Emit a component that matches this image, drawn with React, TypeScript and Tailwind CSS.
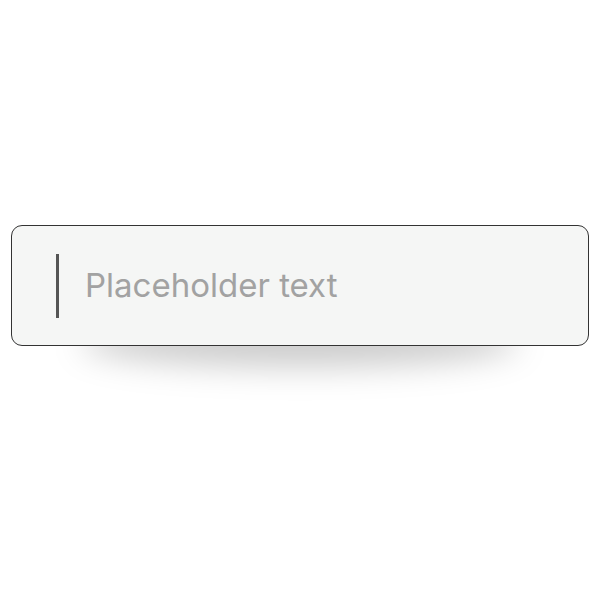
export default function App() {
  return (
    <div className="w-[600px] h-[600px] bg-white flex flex-col items-center pt-[225px]">
      <div className="relative w-[578px] h-[121px]">
        {/* soft elliptical shadow under the field */}
        <div className="absolute left-[70px] right-[70px] top-[92px] h-[50px] rounded-[50%] bg-black/20 blur-[16px]" />
        <div className="relative h-full rounded-[11px] border border-[#333333] bg-[#f5f6f5] flex items-center pl-[44px]">
          <div className="w-[3px] h-[64px] bg-[#555555]" />
          <span className="ml-[26px] text-[33px] text-[#a2a2a2] font-['Inter',sans-serif] leading-none">
            Placeholder text
          </span>
        </div>
      </div>
    </div>
  );
}
